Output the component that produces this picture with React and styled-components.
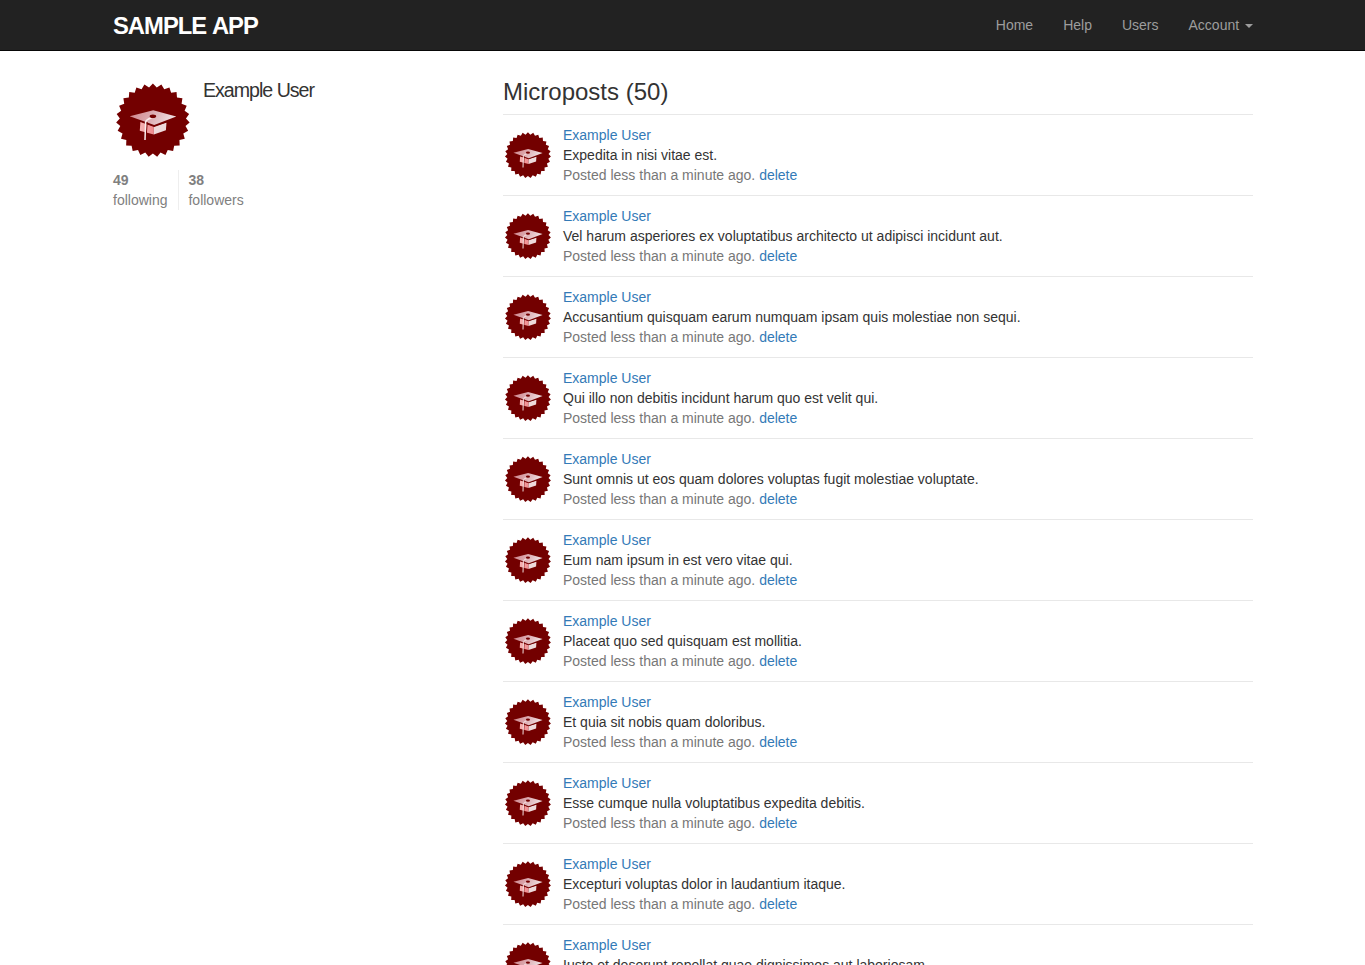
import React from "react";
import styled, { createGlobalStyle } from "styled-components";

const GlobalStyle = createGlobalStyle`
  * { box-sizing: border-box; }
  html, body { height: 100%; overflow: hidden; }
  body {
    margin: 0;
    background: #fff;
    color: #333;
    font-family: "Helvetica Neue", Helvetica, "Liberation Sans", Arial, sans-serif;
    font-size: 14px;
    line-height: 20px;
  }
`;

const Navbar = styled.header`
  height: 51px;
  background: #222;
  border-bottom: 1px solid #080808;
`;

const Container = styled.div`
  width: 1169px;
  margin: 0 auto;
  padding: 0 14px 0 15px;
`;

const NavInner = styled(Container)`
  display: flex;
  justify-content: space-between;
`;

const Logo = styled.a`
  padding-top: 9px;
  color: #fff;
  font-size: 23.8px;
  line-height: 34px;
  font-weight: bold;
  letter-spacing: -1px;
  word-spacing: 1px;
  text-transform: uppercase;
`;

const NavList = styled.nav`
  display: flex;
  margin-right: -15px;
`;

const NavLink = styled.a`
  padding: 15px;
  color: #9d9d9d;
`;

const Caret = styled.b`
  display: inline-block;
  margin-left: 2px;
  vertical-align: middle;
  border-top: 4px solid;
  border-right: 4px solid transparent;
  border-left: 4px solid transparent;
`;

const Columns = styled(Container)`
  display: grid;
  grid-template-columns: 360px 750px;
  column-gap: 30px;
`;

const Profile = styled.aside`
  padding-top: 29px;
`;

const UserInfo = styled.section`
  display: flex;
  gap: 10px;
  height: 80px;
`;

const UserName = styled.h1`
  margin: 0;
  font-size: 19.6px;
  line-height: 20px;
  font-weight: 500;
  letter-spacing: -1px;
`;

const Stats = styled.section`
  display: flex;
  margin-top: 10px;
`;

const Stat = styled.a`
  display: flex;
  flex-direction: column;
  padding: 0 10.6px 0 9.4px;
  border-left: 1px solid #eee;
  color: gray;
  &:first-child {
    padding-left: 0;
    border-left: 0;
  }
`;

const Feed = styled.main`
  padding-top: 28px;
`;

const FeedTitle = styled.h3`
  margin: 0 0 9px;
  font-size: 24px;
  line-height: 26px;
  font-weight: 500;
`;

const Posts = styled.ol`
  list-style: none;
  margin: 0;
  padding: 0;
`;

const Post = styled.li`
  display: flex;
  gap: 10px;
  padding: 10px 0;
  border-top: 1px solid #e8e8e8;
`;

const PostBody = styled.div`
  display: flex;
  flex-direction: column;
`;

const Link = styled.a`
  color: #337ab7;
`;

const Timestamp = styled.span`
  color: #777;
`;

const Avatar = styled.svg`
  display: block;
  flex: none;
  width: ${(p) => p.$size}px;
  height: ${(p) => p.$size}px;
  margin-top: ${(p) => p.$offset || 0}px;
`;

const TEETH = 27;
const sealPoints = Array.from({ length: TEETH * 2 }, (_, i) => {
  const radius = i % 2 ? 33.1 : 36.8;
  const angle = (Math.PI * i) / TEETH;
  return `${(39.9 + radius * Math.sin(angle)).toFixed(2)},${(40.3 - radius * Math.cos(angle)).toFixed(2)}`;
}).join(" ");

function Gravatar({ size, offset }) {
  return (
    <Avatar viewBox="0 0 80 80" $size={size} $offset={offset} role="img" aria-label="Example User">
      <defs>
        <linearGradient id="board" x1="0" y1="0" x2="1" y2="0.2">
          <stop offset="0" stopColor="#cf838a" />
          <stop offset="0.5" stopColor="#dcaab0" />
          <stop offset="1" stopColor="#efe0e2" />
        </linearGradient>
        <linearGradient id="capSide" x1="0" y1="0" x2="1" y2="0">
          <stop offset="0" stopColor="#f6b4b4" />
          <stop offset="1" stopColor="#f08a8e" />
        </linearGradient>
      </defs>
      <polygon points={sealPoints} fill="#730000" />
      <path d="M27.4 41.4 40.8 46.4V54.4L26.8 50.7Z" fill="url(#capSide)" />
      <path d="M40.8 46.4 53.5 42.6 52.9 50.2 40.8 54.4Z" fill="#eedadb" />
      <path d="M27 41 41.2 46 54 41.3" fill="none" stroke="#730000" strokeWidth="1.8" />
      <path d="M16.7 36.2 40.2 30.3 63.3 36.6 41.2 45Z" fill="url(#board)" />
      <path d="M34.2 42.2 33.1 58" fill="none" stroke="#730000" strokeWidth="1" />
      <path d="M38.6 37.8C35.5 38.9 33 39.8 32.6 42.2L32 60" fill="none" stroke="#fbeeee" strokeWidth="1.5" />
      <ellipse cx="39.9" cy="36.3" rx="3.3" ry="1.8" fill="#730000" />
    </Avatar>
  );
}

const posts = [
  "Expedita in nisi vitae est.",
  "Vel harum asperiores ex voluptatibus architecto ut adipisci incidunt aut.",
  "Accusantium quisquam earum numquam ipsam quis molestiae non sequi.",
  "Qui illo non debitis incidunt harum quo est velit qui.",
  "Sunt omnis ut eos quam dolores voluptas fugit molestiae voluptate.",
  "Eum nam ipsum in est vero vitae qui.",
  "Placeat quo sed quisquam est mollitia.",
  "Et quia sit nobis quam doloribus.",
  "Esse cumque nulla voluptatibus expedita debitis.",
  "Excepturi voluptas dolor in laudantium itaque.",
  "Iusto et deserunt repellat quae dignissimos aut laboriosam.",
];

export default function App() {
  return (
    <>
      <GlobalStyle />
      <Navbar>
        <NavInner>
          <Logo>sample app</Logo>
          <NavList>
            <NavLink>Home</NavLink>
            <NavLink>Help</NavLink>
            <NavLink>Users</NavLink>
            <NavLink>
              Account <Caret />
            </NavLink>
          </NavList>
        </NavInner>
      </Navbar>
      <Columns>
        <Profile>
          <UserInfo>
            <Gravatar size={80} />
            <UserName>Example User</UserName>
          </UserInfo>
          <Stats>
            <Stat>
              <strong>49</strong>
              <span>following</span>
            </Stat>
            <Stat>
              <strong>38</strong>
              <span>followers</span>
            </Stat>
          </Stats>
        </Profile>
        <Feed>
          <FeedTitle>Microposts (50)</FeedTitle>
          <Posts>
            {posts.map((content) => (
              <Post key={content}>
                <Gravatar size={50} offset={5} />
                <PostBody>
                  <Link>Example User</Link>
                  <span>{content}</span>
                  <Timestamp>
                    Posted less than a minute ago. <Link>delete</Link>
                  </Timestamp>
                </PostBody>
              </Post>
            ))}
          </Posts>
        </Feed>
      </Columns>
    </>
  );
}
